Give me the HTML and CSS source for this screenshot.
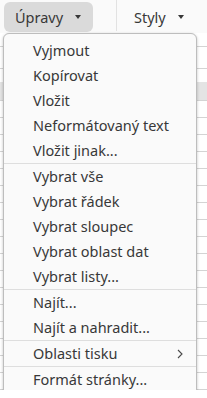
FILE: index.html
```html
<!DOCTYPE html>
<html lang="cs">
<head>
  <meta charset="UTF-8">
  <title>Úpravy</title>
  <link rel="stylesheet" href="styles.css">
</head>
<body>
  <div class="toolbar">
    <button class="tb-btn active">Úpravy <span class="caret"></span></button>
    <div class="tb-sep"></div>
    <button class="tb-btn">Styly <span class="caret"></span></button>
  </div>

  <div class="sheet">
    <div class="row r-top"></div>
    <div class="row r-head"></div>
    <div class="row r-plain"></div>
    <div class="row r-sel"></div>
    <div class="row"></div><div class="row"></div><div class="row"></div><div class="row"></div>
    <div class="row"></div><div class="row"></div><div class="row"></div><div class="row"></div>
    <div class="row"></div><div class="row"></div><div class="row"></div><div class="row"></div>
    <div class="row"></div><div class="row"></div><div class="row"></div><div class="row"></div>
    <div class="row"></div>
  </div>

  <ul class="menu">
    <li>Vyjmout</li>
    <li>Kopírovat</li>
    <li>Vložit</li>
    <li>Neformátovaný text</li>
    <li>Vložit jinak...</li>
    <li class="sep"></li>
    <li>Vybrat vše</li>
    <li>Vybrat řádek</li>
    <li>Vybrat sloupec</li>
    <li>Vybrat oblast dat</li>
    <li>Vybrat listy...</li>
    <li class="sep"></li>
    <li>Najít...</li>
    <li>Najít a nahradit...</li>
    <li class="sep"></li>
    <li class="sub">Oblasti tisku
      <svg class="chev" width="6" height="10" viewBox="0 0 6 10"><path d="M1 1 L5 5 L1 9" fill="none" stroke="#4a4a4a" stroke-width="1.1"/></svg>
    </li>
    <li class="sep"></li>
    <li>Formát stránky...</li>
  </ul>
</body>
</html>
```

FILE: styles.css
```css
body {
  margin: 0;
  font-family: "Noto Sans", sans-serif;
  font-size: 14.5px;
  color: #383838;
  background-color: #fff;
  position: relative;
  overflow: hidden;
}
.toolbar {
  height: 33px;
  background-color: #fafafa;
  display: flex;
  align-items: flex-start;
  padding-left: 4px;
}
.tb-btn {
  font: inherit;
  color: #383838;
  background: none;
  border: none;
  height: 30px;
  margin-top: 2px;
  border-radius: 6px;
  display: flex;
  align-items: center;
  gap: 12px;
  padding: 0 11px;
}
.tb-btn.active {
  background-color: #dadada;
  width: 89px;
}
.tb-sep {
  width: 1px;
  height: 31px;
  background-color: #e2e2e2;
  margin-left: 23px;
  margin-right: 6px;
}
.caret {
  width: 0;
  height: 0;
  border-left: 3.5px solid transparent;
  border-right: 3.5px solid transparent;
  border-top: 4px solid #383838;
}
.row {
  height: 16px;
  border-bottom: 1px solid #d4d4d4;
}
.r-top { height: 13px; }
.r-head { height: 21px; }
.r-plain { height: 13px; border-bottom: none; }
.r-sel { height: 18px; background-color: #e4e4e4; }
.menu {
  position: absolute;
  top: 33px;
  left: 3px;
  width: 192px;
  margin: 0;
  padding: 4px 0;
  list-style: none;
  background-color: #fafafa;
  border: 1px solid #bdbdbd;
  border-radius: 6px;
  box-shadow: 0 1px 3px rgba(0, 0, 0, 0.25);
}
.menu li {
  height: 25px;
  line-height: 25px;
  padding-left: 29px;
  padding-right: 12px;
}
.menu li.sep {
  height: 1px;
  padding: 0;
  background-color: #dedede;
}
.menu li.sub {
  display: flex;
  align-items: center;
  justify-content: space-between;
}
.chev {
  margin-right: 1px;
}
```
